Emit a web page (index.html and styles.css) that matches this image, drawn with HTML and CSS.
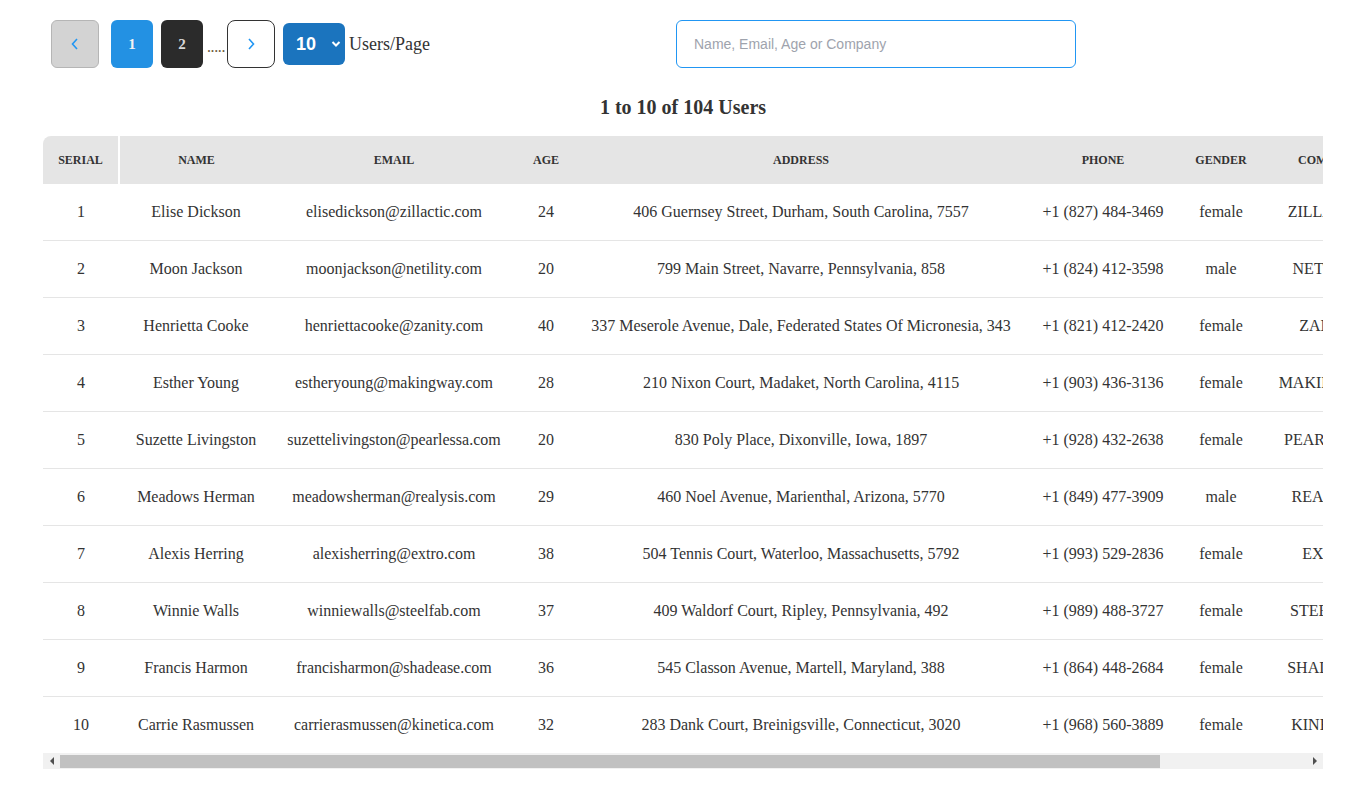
FILE: index.html
```html
<!DOCTYPE html>
<html lang="en">
<head>
<meta charset="utf-8">
<title>Users</title>
<link rel="stylesheet" href="styles.css">
</head>
<body>
<div class="page">
  <div class="topbar">
    <div class="pager">
      <button class="btn btn-prev" aria-label="Previous">
        <svg width="12" height="14" viewBox="0 0 12 14"><path d="M8 2 L3.5 7 L8 12" fill="none" stroke="#2196f3" stroke-width="1.6"/></svg>
      </button>
      <button class="btn btn-page btn-active">1</button>
      <button class="btn btn-page btn-dark">2</button>
      <span class="dots">.....</span>
      <button class="btn btn-next" aria-label="Next">
        <svg width="12" height="14" viewBox="0 0 12 14"><path d="M4 2 L8.5 7 L4 12" fill="none" stroke="#2196f3" stroke-width="1.6"/></svg>
      </button>
      <div class="select-wrap">
        <select class="per-page">
          <option>10</option>
          <option>20</option>
          <option>50</option>
        </select>
        <svg class="caret" width="10" height="8" viewBox="0 0 10 8"><path d="M1.5 2 L5 5.5 L8.5 2" fill="none" stroke="#fff" stroke-width="2"/></svg>
      </div>
      <span class="per-label">Users/Page</span>
    </div>
    <input class="search" type="text" placeholder="Name, Email, Age or Company">
  </div>

  <h3 class="summary">1 to 10 of 104 Users</h3>

  <div class="table-wrap">
    <table class="users">
      <colgroup>
        <col class="w-serial">
        <col class="w-name">
        <col class="w-email">
        <col class="w-age">
        <col class="w-address">
        <col class="w-phone">
        <col class="w-gender">
        <col class="w-company">
      </colgroup>
      <thead>
        <tr>
          <th class="c-serial">Serial</th>
          <th>Name</th>
          <th>Email</th>
          <th>Age</th>
          <th>Address</th>
          <th>Phone</th>
          <th>Gender</th>
          <th class="c-company">Company</th>
        </tr>
      </thead>
      <tbody>
        <tr><td>1</td><td>Elise Dickson</td><td>elisedickson@zillactic.com</td><td>24</td><td>406 Guernsey Street, Durham, South Carolina, 7557</td><td>+1 (827) 484-3469</td><td>female</td><td class="c-company">ZILLACTIC</td></tr>
        <tr><td>2</td><td>Moon Jackson</td><td>moonjackson@netility.com</td><td>20</td><td>799 Main Street, Navarre, Pennsylvania, 858</td><td>+1 (824) 412-3598</td><td>male</td><td class="c-company">NETILITY</td></tr>
        <tr><td>3</td><td>Henrietta Cooke</td><td>henriettacooke@zanity.com</td><td>40</td><td>337 Meserole Avenue, Dale, Federated States Of Micronesia, 343</td><td>+1 (821) 412-2420</td><td>female</td><td class="c-company">ZANITY</td></tr>
        <tr><td>4</td><td>Esther Young</td><td>estheryoung@makingway.com</td><td>28</td><td>210 Nixon Court, Madaket, North Carolina, 4115</td><td>+1 (903) 436-3136</td><td>female</td><td class="c-company">MAKINGWAY</td></tr>
        <tr><td>5</td><td>Suzette Livingston</td><td>suzettelivingston@pearlessa.com</td><td>20</td><td>830 Poly Place, Dixonville, Iowa, 1897</td><td>+1 (928) 432-2638</td><td>female</td><td class="c-company">PEARLESSA</td></tr>
        <tr><td>6</td><td>Meadows Herman</td><td>meadowsherman@realysis.com</td><td>29</td><td>460 Noel Avenue, Marienthal, Arizona, 5770</td><td>+1 (849) 477-3909</td><td>male</td><td class="c-company">REALYSIS</td></tr>
        <tr><td>7</td><td>Alexis Herring</td><td>alexisherring@extro.com</td><td>38</td><td>504 Tennis Court, Waterloo, Massachusetts, 5792</td><td>+1 (993) 529-2836</td><td>female</td><td class="c-company">EXTRO</td></tr>
        <tr><td>8</td><td>Winnie Walls</td><td>winniewalls@steelfab.com</td><td>37</td><td>409 Waldorf Court, Ripley, Pennsylvania, 492</td><td>+1 (989) 488-3727</td><td>female</td><td class="c-company">STEELFAB</td></tr>
        <tr><td>9</td><td>Francis Harmon</td><td>francisharmon@shadease.com</td><td>36</td><td>545 Classon Avenue, Martell, Maryland, 388</td><td>+1 (864) 448-2684</td><td>female</td><td class="c-company">SHADEASE</td></tr>
        <tr><td>10</td><td>Carrie Rasmussen</td><td>carrierasmussen@kinetica.com</td><td>32</td><td>283 Dank Court, Breinigsville, Connecticut, 3020</td><td>+1 (968) 560-3889</td><td>female</td><td class="c-company">KINETICA</td></tr>
      </tbody>
    </table>
  </div>
  <div class="hscroll" aria-hidden="true">
    <span class="hs-btn hs-left"></span>
    <div class="hs-track">
      <div class="hs-thumb" style="width: 1100px;"></div>
    </div>
    <span class="hs-btn hs-right"></span>
  </div>
</div>
</body>
</html>
```
FILE: styles.css
```css
* { box-sizing: border-box; }

html, body {
  margin: 0;
  padding: 0;
  background: #ffffff;
}

body {
  font-family: "Liberation Serif", "Times New Roman", serif;
  color: #333333;
}

.page {
  width: 1280px;
  margin: 0 auto;
  padding-top: 20px;
}

.topbar {
  display: flex;
  align-items: center;
  padding-left: 8px;
}

.pager {
  display: flex;
  align-items: center;
}

.btn {
  height: 48px;
  border-radius: 6px;
  display: flex;
  align-items: center;
  justify-content: center;
  padding: 0;
  font-family: "Liberation Serif", serif;
  font-weight: bold;
  font-size: 15px;
  cursor: pointer;
}

.btn-prev {
  width: 48px;
  background: #d3d3d3;
  border: 1px solid #b5b5b5;
  margin-right: 12px;
}

.btn-page {
  width: 42px;
  border: none;
}

.btn-active {
  background: #2391e3;
  color: #f2f2f2;
  margin-right: 8px;
}

.btn-dark {
  background: #2b2b2b;
  color: #d8d8d8;
}

.dots {
  width: 24px;
  padding-left: 4px;
  font-size: 16px;
  color: #6b5a3a;
  letter-spacing: -0.4px;
  line-height: 1;
  margin-top: 6px;
}

.btn-next {
  width: 48px;
  background: #ffffff;
  border: 1px solid #333333;
  border-radius: 8px;
  margin-right: 8px;
}

.select-wrap {
  position: relative;
  width: 62px;
  height: 42px;
  margin-right: 4px;
}

.per-page {
  appearance: none;
  -webkit-appearance: none;
  width: 62px;
  height: 42px;
  border: none;
  border-radius: 6px;
  background: #1b74be;
  color: #ffffff;
  font-family: "Liberation Sans", Arial, sans-serif;
  font-weight: bold;
  font-size: 18px;
  padding: 0 0 0 13px;
  cursor: pointer;
}

.caret {
  position: absolute;
  right: 4px;
  top: 17px;
  pointer-events: none;
}

.per-label {
  font-size: 18px;
  color: #333333;
}

.search {
  width: 400px;
  height: 48px;
  margin-left: 246px;
  border: 1px solid #2196f3;
  border-radius: 6px;
  padding: 0 0 0 17px;
  font-family: "Liberation Sans", Arial, sans-serif;
  font-size: 14px;
  color: #333333;
  outline: none;
}

.search::placeholder {
  color: #9ea3ad;
}

.summary {
  margin: 28px 0 18px;
  text-align: center;
  font-size: 20px;
  font-weight: bold;
  line-height: 22px;
  color: #333333;
}

.table-wrap {
  width: 100%;
  overflow-x: auto;
  scrollbar-width: none;
}

.table-wrap::-webkit-scrollbar {
  display: none;
}

.users {
  border-collapse: collapse;
  table-layout: fixed;
  width: 1450px;
  white-space: nowrap;
}

.w-serial { width: 76px; }
.w-name { width: 154px; }
.w-email { width: 242px; }
.w-age { width: 62px; }
.w-address { width: 448px; }
.w-phone { width: 156px; }
.w-gender { width: 80px; }
.w-company { width: 232px; }

.users th {
  background: #e5e5e5;
  font-size: 12px;
  font-weight: bold;
  text-transform: uppercase;
  line-height: 14px;
  padding: 17px 0;
  color: #333333;
  text-align: center;
}

.users th.c-serial {
  border-right: 2px solid #ffffff;
  border-top-left-radius: 8px;
}

.users td {
  font-size: 16px;
  line-height: 18px;
  padding: 19px 0;
  text-align: center;
  border-bottom: 1px solid #e5e5e5;
  color: #333333;
}

.users tbody tr:last-child td {
  border-bottom: none;
}

.users .c-company {
  padding-left: 17px;
  padding-right: 113px;
}

/* horizontal scrollbar */
.hscroll {
  display: flex;
  height: 16px;
  background: #f1f1f1;
}

.hs-btn {
  flex: 0 0 17px;
  display: flex;
  align-items: center;
  justify-content: center;
}

.hs-left::before {
  content: "";
  border-top: 4px solid transparent;
  border-bottom: 4px solid transparent;
  border-right: 4px solid #505050;
}

.hs-right::before {
  content: "";
  border-top: 4px solid transparent;
  border-bottom: 4px solid transparent;
  border-left: 4px solid #505050;
}

.hs-track {
  flex: 1;
  display: flex;
  padding: 2px 0 1px;
}

.hs-thumb {
  height: 13px;
  background: #c1c1c1;
}
```
